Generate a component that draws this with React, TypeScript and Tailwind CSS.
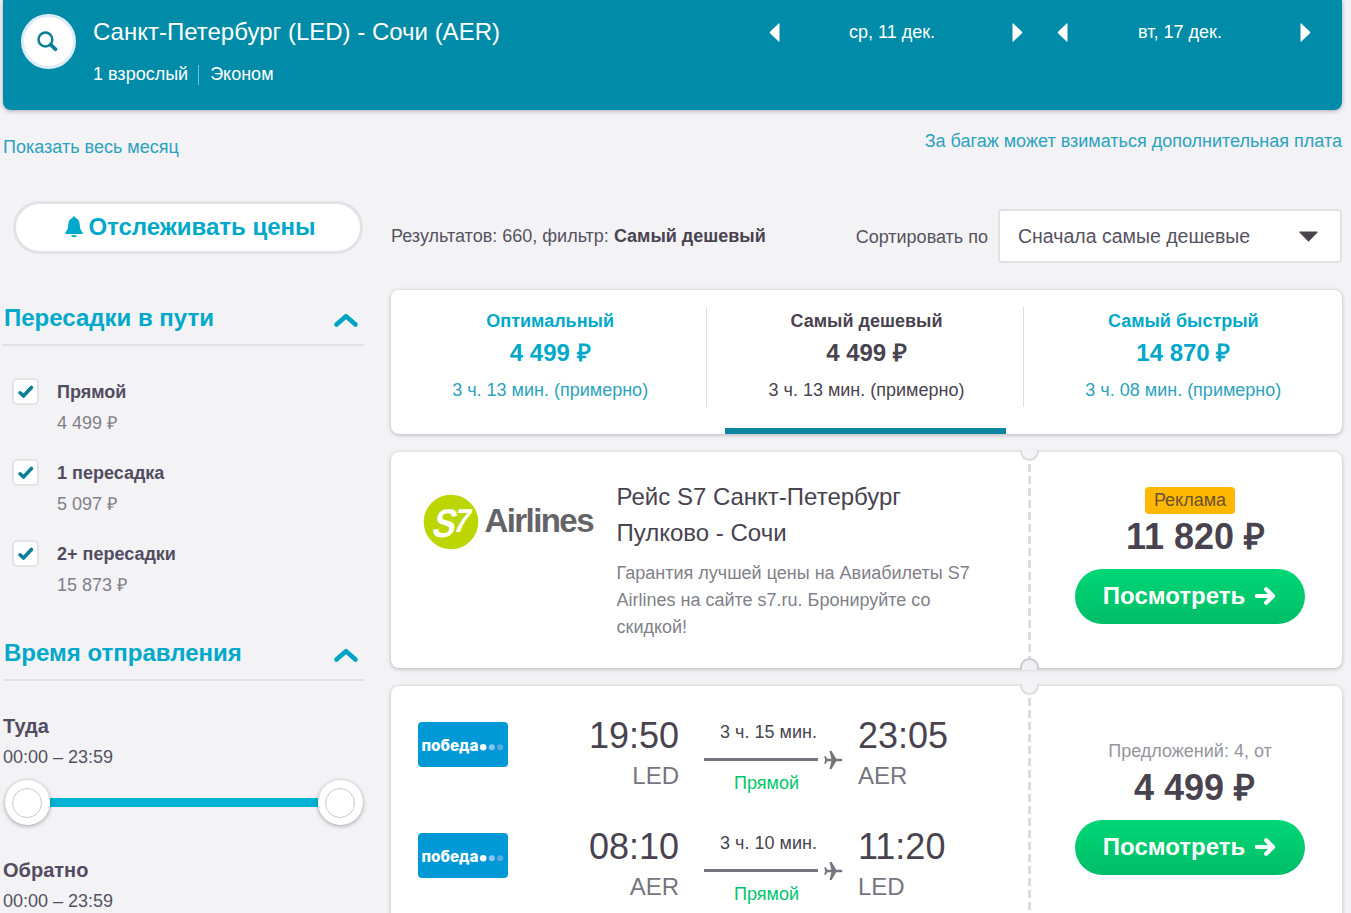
import React, { useState } from "react";
import clsx from "clsx";

// ─── Icons ─────────────────────────────────────────────────────────────────────

const SearchIcon = () => (
  <svg width="22" height="22" viewBox="0 0 22 22" fill="none" stroke="#0b7f99" strokeLinecap="round" className="shrink-0">
    <circle cx="8.400" cy="8.500" r="6.900" strokeWidth="2.500" />
    <path d="M14.200 14.100l4.400 4.200" strokeWidth="3.800" />
  </svg>
);

const BellIcon = () => (
  <svg width="18" height="22" viewBox="0 0 18 22" fill="#00a8ca" className="shrink-0">
    <path d="M9 .6c.9 0 1.500.6 1.500 1.400 2.700.8 4 3 4.200 6.200.3 4.300.8 5.700 2.800 8 .6.8.4 1.800-.6 1.800H1.100c-1 0-1.200-1-.6-1.800 2-2.300 2.500-3.700 2.800-8C3.500 5 4.800 2.800 7.500 2c0-.8.6-1.400 1.500-1.400z" />
    <path d="M6 19.300h6c-.4 1.200-1.500 2-3 2s-2.600-.8-3-2z" />
  </svg>
);

const ChevronUp = () => (
  <svg width="26" height="16" viewBox="0 0 26 16" fill="none" stroke="#00a5c4" strokeWidth="4.600" strokeLinecap="round" strokeLinejoin="round">
    <path d="M3.500 12.500L13 4.200l9.500 8.300" />
  </svg>
);

const CheckIcon = () => (
  <svg width="16" height="14" viewBox="0 0 16 14" fill="none" stroke="#0b7f99" strokeWidth="3.600" strokeLinecap="round" strokeLinejoin="round">
    <path d="M2.100 7.800l3.400 3.200 7.900-8.500" />
  </svg>
);

const ArrowIcon = () => (
  <svg width="22" height="20" viewBox="0 0 22 20" fill="none" stroke="#fff" strokeWidth="4.200" strokeLinecap="round" strokeLinejoin="round">
    <path d="M2.800 10h15.600M12.200 3.200L19 10l-6.800 6.800" />
  </svg>
);

const PlaneIcon = () => (
  <svg width="20" height="20" viewBox="0 0 20 20" fill="#76757f">
    <path d="M19.400 10c0-.8-.6-1.300-1.500-1.300h-4.700L8.600 1H6.500l1.900 7.700H4.400L2.700 6.200H1.200L2.200 10l-1 3.800h1.500l1.700-2.500h4L6.500 19h2.100l4.600-7.700h4.700c.9 0 1.500-.5 1.500-1.300z" />
  </svg>
);

const Triangle: React.FC<{ flip?: boolean }> = ({ flip }) => (
  <svg width="11" height="19" viewBox="0 0 11 19" fill="#fff" className={clsx(flip && "rotate-180")}>
    <path d="M10.500.8v17.400a.5.5 0 01-.9.3L.8 9.900a.6.6 0 010-.8L9.600.5a.5.5 0 01.9.3z" />
  </svg>
);

const S7Logo = () => (
  <svg width="184" height="56" viewBox="0 0 184 56">
    <circle cx="28" cy="28" r="27.300" fill="#bbd600" />
    <g fontWeight="700" fill="#fff">
      <text transform="translate(7.500 43) skewX(-14)" fontSize="40" textLength="23" lengthAdjust="spacingAndGlyphs">S</text>
      <text transform="translate(29 37.500) skewX(-14)" fontSize="33" textLength="16" lengthAdjust="spacingAndGlyphs">7</text>
    </g>
    <text x="61.500" y="37.500" fontSize="33" fontWeight="700" fill="#646368" textLength="110" lengthAdjust="spacing">Airlines</text>
  </svg>
);

const PobedaLogo = () => (
  <svg width="90" height="45" viewBox="0 0 90 45" className="rounded-[4px] bg-[#0099d8]">
    <text x="3.500" y="28.700" fontSize="16" fontWeight="800" fill="#fff" textLength="57" lengthAdjust="spacingAndGlyphs" className="font-['Inter',sans-serif]">победа</text>
    <circle cx="65.200" cy="25.300" r="3.200" fill="#fff" />
    <circle cx="73.800" cy="25.300" r="3" fill="#8cc4f0" />
    <circle cx="82.200" cy="25.300" r="3" fill="#5cabdf" />
  </svg>
);

// ─── Header ────────────────────────────────────────────────────────────────────

const DatePicker: React.FC<{ label: string }> = ({ label }) => (
  <div className="flex w-[254px] items-center">
    <button type="button"><Triangle /></button>
    <span className="flex-1 pr-2 text-center text-[18px] leading-[27px]">{label}</span>
    <button type="button"><Triangle flip /></button>
  </div>
);

const Header = () => (
  <header className="ml-[3px] flex h-[110px] w-[1339px] rounded-b-lg bg-[#008ca8] text-white shadow-[0_1px_4px_rgba(37,32,51,0.35)]">
    <button type="button" className="mt-[14px] ml-[18px] flex h-[55px] w-[55px] items-center justify-center rounded-full border-[3px] border-[#dcecf9] bg-white pr-[2px]">
      <SearchIcon />
    </button>
    <div className="mt-[14px] ml-[17px]">
      <h1 className="text-[24px] leading-9">Санкт-Петербург (LED) - Сочи (AER)</h1>
      <div className="mt-[11px] flex items-center text-[18px] leading-[27px]">
        <span>1 взрослый</span>
        <span className="mr-[11px] ml-[10px] h-5 w-px bg-[#6fc3d5]" />
        <span>Эконом</span>
      </div>
    </div>
    <div className="mt-[19px] mr-[31px] ml-auto flex h-[27px] gap-[34px]">
      <DatePicker label="ср, 11 дек." />
      <DatePicker label="вт, 17 дек." />
    </div>
  </header>
);

// ─── Sidebar ───────────────────────────────────────────────────────────────────

const STOPS = [
  { label: "Прямой", price: "4 499 ₽" },
  { label: "1 пересадка", price: "5 097 ₽" },
  { label: "2+ пересадки", price: "15 873 ₽" },
];

const SectionHeading: React.FC<{ title: string }> = ({ title }) => (
  <div className="flex h-[46px] items-start justify-between border-b-2 border-[#e2e1e6] pr-[5px] pl-px">
    <h2 className="text-[24px] leading-9 font-bold text-[#00a8ca]">{title}</h2>
    <span className="mt-3"><ChevronUp /></span>
  </div>
);

const Knob = () => (
  <span className="z-10 flex h-[45px] w-[45px] shrink-0 items-center justify-center rounded-full bg-white shadow-[0_1px_4px_rgba(37,32,51,0.4)]">
    <span className="h-[30px] w-[30px] rounded-full border border-[#c9c8cf]" />
  </span>
);

const TimeRange: React.FC<{ title: string }> = ({ title }) => (
  <div className="h-[144px]">
    <h3 className="text-[20px] leading-[30px] font-bold text-[#524c61]">{title}</h3>
    <p className="mt-[3px] text-[18px] leading-[27px] text-[#55525f]">00:00 – 23:59</p>
    <div className="mt-[9px] ml-[1.5px] flex w-[358px] items-center">
      <Knob />
      <span className="h-[9px] flex-1 bg-[#00b2d6]" />
      <Knob />
    </div>
  </div>
);

const Sidebar = () => {
  const [checked, setChecked] = useState([true, true, true]);
  const toggle = (index: number) => setChecked(checked.map((c, i) => (i === index ? !c : c)));

  return (
    <aside className="ml-[3px] w-[361px]">
      <button type="button" className="ml-[10px] flex h-[53px] w-[350px] items-center justify-center rounded-full border-[3px] border-[#e2e1e6] bg-white pb-px pl-[5px] text-[24px] font-bold text-[#00a8ca]">
        <BellIcon />
        <span className="ml-[5px] leading-9">Отслеживать цены</span>
      </button>
      <div className="mt-[46px]">
        <SectionHeading title="Пересадки в пути" />
        <ul className="mt-[33px]">
          {STOPS.map((stop, i) => (
            <li key={stop.label} className="flex h-[81px] items-start pl-[9px]">
              <button
                type="button"
                onClick={() => toggle(i)}
                className="-mt-px flex h-[27px] w-[27px] items-center justify-center rounded-[5px] border-2 border-[#e4e3e8] bg-white"
              >
                {checked[i] && <CheckIcon />}
              </button>
              <div className="ml-[18px] text-[18px] leading-[27px]">
                <p className="font-bold text-[#524c61]">{stop.label}</p>
                <p className="mt-1 text-[#817f89]">{stop.price}</p>
              </div>
            </li>
          ))}
        </ul>
      </div>
      <div className="mt-[13px]">
        <SectionHeading title="Время отправления" />
        <div className="mt-[30px]">
          <TimeRange title="Туда" />
          <TimeRange title="Обратно" />
        </div>
      </div>
    </aside>
  );
};

// ─── Results ───────────────────────────────────────────────────────────────────

const TABS = [
  { title: "Оптимальный", price: "4 499 ₽", time: "3 ч. 13 мин. (примерно)" },
  { title: "Самый дешевый", price: "4 499 ₽", time: "3 ч. 13 мин. (примерно)" },
  { title: "Самый быстрый", price: "14 870 ₽", time: "3 ч. 08 мин. (примерно)" },
];

const SortTabs = () => {
  const [active, setActive] = useState(1);
  return (
    <div className="flex h-[144px] rounded-lg bg-white pt-[17px] pr-[2px] shadow-[0_1px_4px_rgba(37,32,51,0.3)]">
      {TABS.map((tab, i) => (
        <button
          key={tab.title}
          type="button"
          onClick={() => setActive(i)}
          className={clsx("flex flex-1 flex-col items-center", active === i ? "text-[#48434f]" : "text-[#00a8ca]")}
        >
          <span className={clsx("flex h-[100px] w-full flex-col items-center pt-px pl-[3px]", i < 2 && "border-r border-[#dddce1]")}>
            <span className="text-[18px] leading-[27px] font-bold">{tab.title}</span>
            <span className="text-[24px] leading-9 font-bold">{tab.price}</span>
            <span className={clsx("mt-[6px] text-[18px] leading-[27px]", active !== i && "text-[#2ba3c0]")}>{tab.time}</span>
          </span>
          {active === i && <span className="mt-auto h-[6px] w-[281px] bg-[#0c859f]" />}
        </button>
      ))}
    </div>
  );
};

// Perforated divider between the flight and the price parts of a ticket
const Perforation: React.FC<{ bottom?: boolean }> = ({ bottom }) => (
  <div className="relative w-[3px] shrink-0 bg-[repeating-linear-gradient(to_bottom,#dddce1_0,#dddce1_8px,transparent_8px,transparent_12px)]">
    <span className="absolute -top-[2px] -left-2 h-[11px] w-[19px] rounded-b-[10px] border-2 border-t-0 border-[#dcdbe0] bg-[#f3f2f5]" />
    {bottom && <span className="absolute -bottom-[2px] -left-2 h-[12px] w-[19px] rounded-t-[10px] border-2 border-b-0 border-[#cbcad0] bg-[#f0eff2]" />}
  </div>
);

const ViewButton = () => (
  <button type="button" className="flex h-[55px] w-[230px] items-center justify-center rounded-full bg-gradient-to-b from-[#00d775] to-[#00bd68] pr-px text-[24px] font-bold text-white">
    <span className="-mt-[2px] leading-9">Посмотреть</span>
    <span className="-mt-px ml-[9px]"><ArrowIcon /></span>
  </button>
);

const AdCard = () => (
  <div className="flex h-[216px] rounded-lg bg-white shadow-[0_1px_4px_rgba(37,32,51,0.3)]">
    <div className="flex w-[637px] shrink-0">
      <div className="mt-[42px] ml-[32px]"><S7Logo /></div>
      <div className="mt-[27px] ml-[9.5px] w-[370px]">
        <h3 className="text-[24px] leading-9 text-[#48434f]">Рейс S7 Санкт-Петербург<br />Пулково - Сочи</h3>
        <p className="mt-[9px] text-[18px] leading-[27px] text-[#817f89]">
          Гарантия лучшей цены на Авиабилеты S7<br />Airlines на сайте s7.ru. Бронируйте со<br />скидкой!
        </p>
      </div>
    </div>
    <Perforation bottom />
    <div className="flex flex-1 flex-col items-center pt-[35px] pl-[7px]">
      <span className="flex h-[27px] w-[90px] items-center justify-center rounded-[4px] bg-[#ffb800] text-[18px] text-[#6b5232]">Реклама</span>
      <span className="ml-[11px] text-[36px] leading-[46px] font-bold text-[#48434f]">11 820 ₽</span>
      <span className="mt-[9px]"><ViewButton /></span>
    </div>
  </div>
);

interface LegProps {
  depart: string;
  from: string;
  arrive: string;
  to: string;
  duration: string;
}

const LEGS: LegProps[] = [
  { depart: "19:50", from: "LED", arrive: "23:05", to: "AER", duration: "3 ч. 15 мин." },
  { depart: "08:10", from: "AER", arrive: "11:20", to: "LED", duration: "3 ч. 10 мин." },
];

const Leg: React.FC<LegProps> = ({ depart, from, arrive, to, duration }) => (
  <div className="flex h-[111px] items-start">
    <div className="mt-[11px] ml-[27px]"><PobedaLogo /></div>
    <div className="ml-[51px] w-[120px] text-right">
      <p className="text-[36px] leading-[50px] text-[#48434f]">{depart}</p>
      <p className="-mt-[3px] text-[24px] leading-9 text-[#76757f]">{from}</p>
    </div>
    <div className="mt-[8px] ml-[25px] w-[139px]">
      <p className="pr-[10px] text-center text-[18px] leading-[27px] text-[#48434f]">{duration}</p>
      <div className="flex h-[27px] items-center">
        <span className="h-[3px] w-[114px] bg-[#76757f]" />
        <span className="ml-[5px]"><PlaneIcon /></span>
      </div>
      <p className="-mt-[3px] pr-[14px] text-center text-[18px] leading-[27px] text-[#00c66c]">Прямой</p>
    </div>
    <div className="ml-[15px]">
      <p className="text-[36px] leading-[50px] text-[#48434f]">{arrive}</p>
      <p className="-mt-[3px] text-[24px] leading-9 text-[#76757f]">{to}</p>
    </div>
  </div>
);

const FlightCard = () => (
  <div className="flex h-[260px] rounded-lg bg-white shadow-[0_1px_4px_rgba(37,32,51,0.3)]">
    <div className="w-[637px] shrink-0 pt-[25px]">
      {LEGS.map((leg) => <Leg key={leg.depart} {...leg} />)}
    </div>
    <Perforation />
    <div className="flex flex-1 flex-col items-center pt-[52px] pl-[7px]">
      <span className="text-[18px] leading-[27px] text-[#96949d]">Предложений: 4, от</span>
      <span className="ml-[9px] text-[36px] leading-[46px] font-bold text-[#48434f]">4 499 ₽</span>
      <span className="mt-[9px]"><ViewButton /></span>
    </div>
  </div>
);

const Results = () => (
  <main className="ml-[27px] w-[951px]">
    <div className="flex items-center pt-[8px] text-[18px] leading-[27px] text-[#55525f]">
      <p>Результатов: 660, фильтр: <b className="text-[#48434f]">Самый дешевый</b></p>
      <span className="mt-[2px] mr-[10px] ml-auto">Сортировать по</span>
      <div className="flex h-[54px] w-[344px] items-center justify-between rounded-[4px] border-2 border-[#e2e1e6] bg-white pr-[22px] pl-[18px] text-[19.5px]">
        <span>Сначала самые дешевые</span>
        <svg width="19" height="11" viewBox="0 0 19 11" fill="#48434f">
          <path d="M1 .5h17c.7 0 .9.6.5 1L10 10.200c-.3.3-.7.3-1 0L.5 1.500C.1 1.100.3.500 1 .500z" />
        </svg>
      </div>
    </div>
    <div className="mt-[27px] flex flex-col gap-[18px]">
      <SortTabs />
      <AdCard />
      <FlightCard />
    </div>
  </main>
);

export default function App() {
  return (
    <div className="h-[913px] w-[1351px] overflow-hidden bg-[#f3f2f5] font-['Liberation_Sans',Arial,sans-serif]">
      <Header />
      <div className="flex h-[91px] items-start justify-between pr-[9px] pl-[3px] text-[18px] leading-[27px] text-[#2ba3c0]">
        <a className="mt-[24px]">Показать весь месяц</a>
        <a className="mt-[18px]">За багаж может взиматься дополнительная плата</a>
      </div>
      <div className="flex">
        <Sidebar />
        <Results />
      </div>
    </div>
  );
}
